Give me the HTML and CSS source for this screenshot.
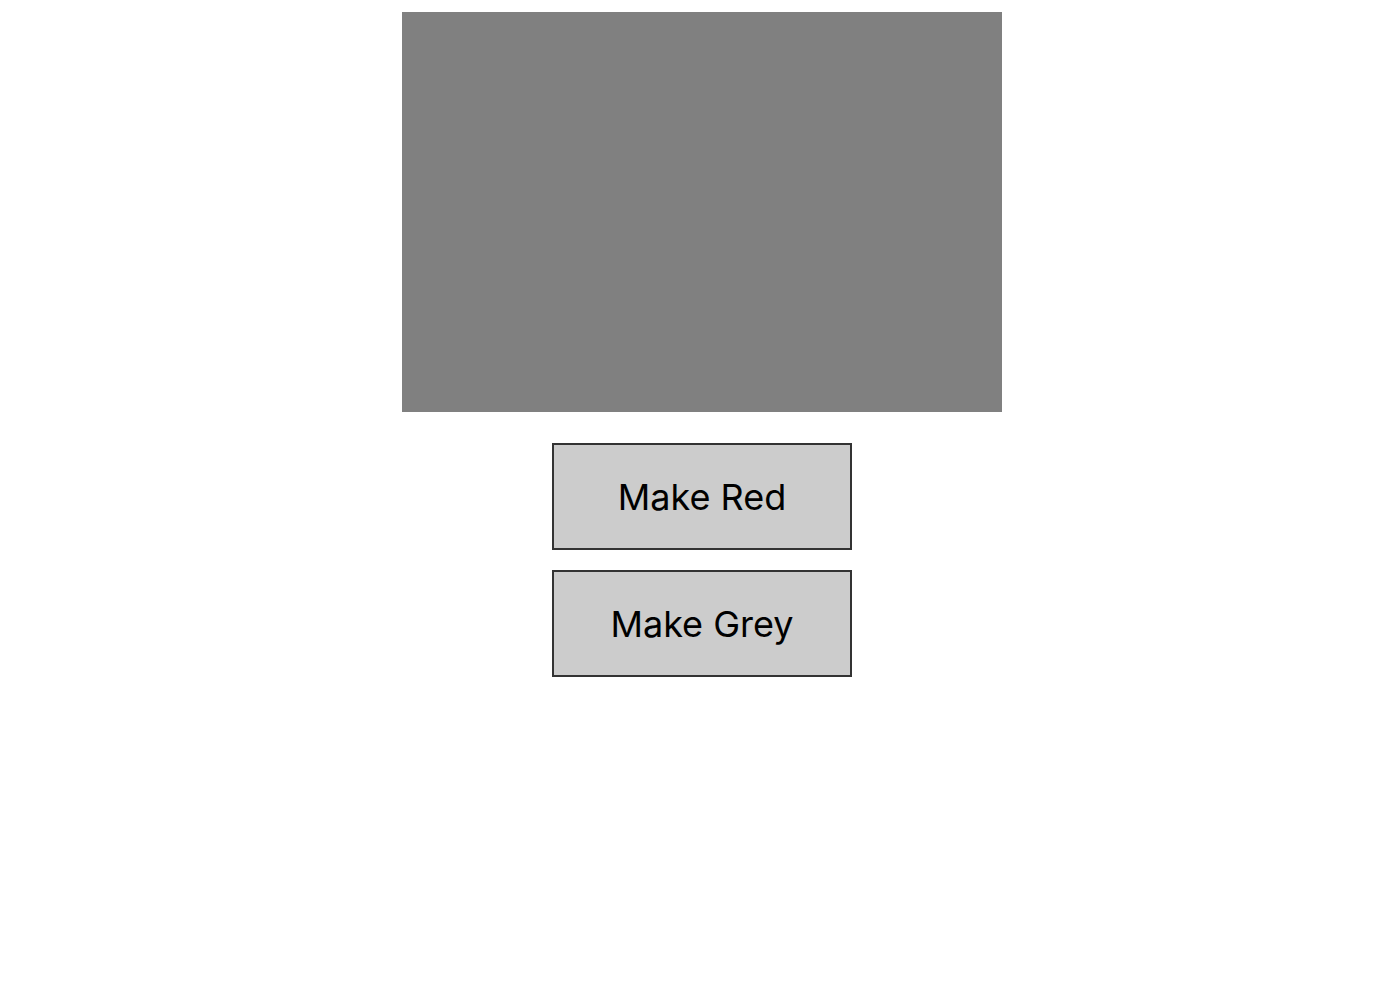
FILE: index.html
```html
<!DOCTYPE html>
<html>
<head>
  <link rel="stylesheet" href="styles.css">
</head>
<body>
  <div class="stage">
    <div id="box" class="box"></div>
    <div class="controls">
      <button class="color-button" data-color="red">Make Red</button>
      <button class="color-button" data-color="grey">Make Grey</button>
    </div>
  </div>

  <script>
    const box = document.getElementById('box');
    document.querySelectorAll('.color-button').forEach(button => {
      button.addEventListener('click', () => {
        box.style.background = button.dataset.color;
      });
    });
  </script>
</body>
</html>
```

FILE: styles.css
```css
body {
  margin: 12px 0 0 6px;
  background: white;
  font-family: Inter, "Liberation Sans", sans-serif;
}

.stage {
  display: flex;
  flex-direction: column;
  align-items: center;
}

.box {
  width: 600px;
  height: 400px;
  background: grey;
}

.controls {
  display: flex;
  flex-direction: column;
  gap: 20px;
  margin-top: 31px;
}

.color-button {
  box-sizing: border-box;
  width: 300px;
  height: 107px;
  border: 2px solid #333;
  background: #ccc;
  color: black;
  font-family: inherit;
  font-size: 36px;
  cursor: pointer;
  padding: 0;
}
```
